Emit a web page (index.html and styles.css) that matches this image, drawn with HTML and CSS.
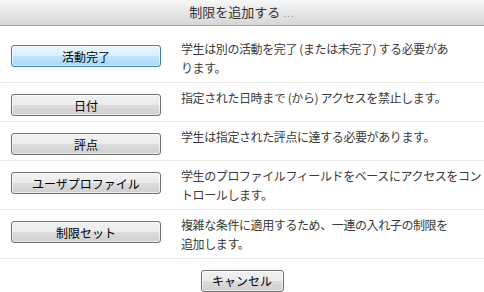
FILE: index.html
```html
<!DOCTYPE html>
<html lang="ja">
<head>
    <meta charset="UTF-8">
    <title>制限を追加する</title>
    <link rel="stylesheet" href="styles.css">
</head>
<body>

    <!-- Add restriction dialog -->
    <div class="dialog">
        <div class="dialog-header">制限を追加する <span class="dots">...</span></div>

        <div class="dialog-body">
            <div class="option">
                <button class="option-btn active">活動完了</button>
                <div class="option-desc">学生は別の活動を完了 (または未完了) する必要があ<br>ります。</div>
            </div>

            <div class="option">
                <button class="option-btn">日付</button>
                <div class="option-desc">指定された日時まで (から) アクセスを禁止します。</div>
            </div>

            <div class="option">
                <button class="option-btn">評点</button>
                <div class="option-desc">学生は指定された評点に達する必要があります。</div>
            </div>

            <div class="option">
                <button class="option-btn">ユーザプロファイル</button>
                <div class="option-desc">学生のプロファイルフィールドをベースにアクセスをコン<br>トロールします。</div>
            </div>

            <div class="option">
                <button class="option-btn">制限セット</button>
                <div class="option-desc">複雑な条件に適用するため、一連の入れ子の制限を<br>追加します。</div>
            </div>
        </div>

        <div class="dialog-footer">
            <button class="cancel-btn">キャンセル</button>
        </div>
    </div>

</body>
</html>
```

FILE: styles.css
```css
body {
    margin: 0;
    background: #fff;
    font-family: "Noto Sans CJK JP", "Noto Sans", sans-serif;
    color: #333;
}

.dialog {
    width: 484px;
}

.dialog-header {
    height: 25px;
    line-height: 24px;
    text-align: center;
    font-size: 13px;
    color: #333;
    background: linear-gradient(to bottom, #f7f7f7 0%, #e4e4e4 60%, #d6d6d6 100%);
    border-bottom: 1px solid #a9a9a9;
}

.dialog-header .dots {
    font-size: 10px;
    color: #8a8a8a;
    letter-spacing: 1px;
}

/* Restriction list */
.dialog-body {
    padding-top: 8px;
}

.option {
    display: flex;
    align-items: flex-start;
    padding: 5px 0 5px 11px;
    border-bottom: 1px solid #ebebeb;
}

.option-btn, .cancel-btn {
    height: 22px;
    padding: 0;
    font-family: "Noto Sans CJK JP", "Noto Sans", sans-serif;
    font-size: 12px;
    color: #000;
    border: 1px solid #707070;
    border-radius: 3px;
    background: linear-gradient(to bottom, #f2f2f2 0%, #ebebeb 50%, #dddddd 50%, #cfcfcf 100%);
    box-shadow: inset 0 0 0 1px rgba(255, 255, 255, 0.6);
    cursor: pointer;
}

.option-btn {
    flex: none;
    width: 150px;
    margin-top: 6px;
}

.option-btn.active {
    border-color: #3c7fb1;
    background: linear-gradient(to bottom, #eaf6fd 0%, #d9f0fc 50%, #bee6fd 50%, #a7d9f5 100%);
}

.option-desc {
    flex: 1;
    margin-left: 20px;
    font-size: 12px;
    line-height: 19px;
    letter-spacing: -0.4px;
    color: #3a3a3a;
    white-space: nowrap;
}

.dialog-footer {
    padding-top: 8px;
    text-align: center;
}

.cancel-btn {
    width: 83px;
}
```
